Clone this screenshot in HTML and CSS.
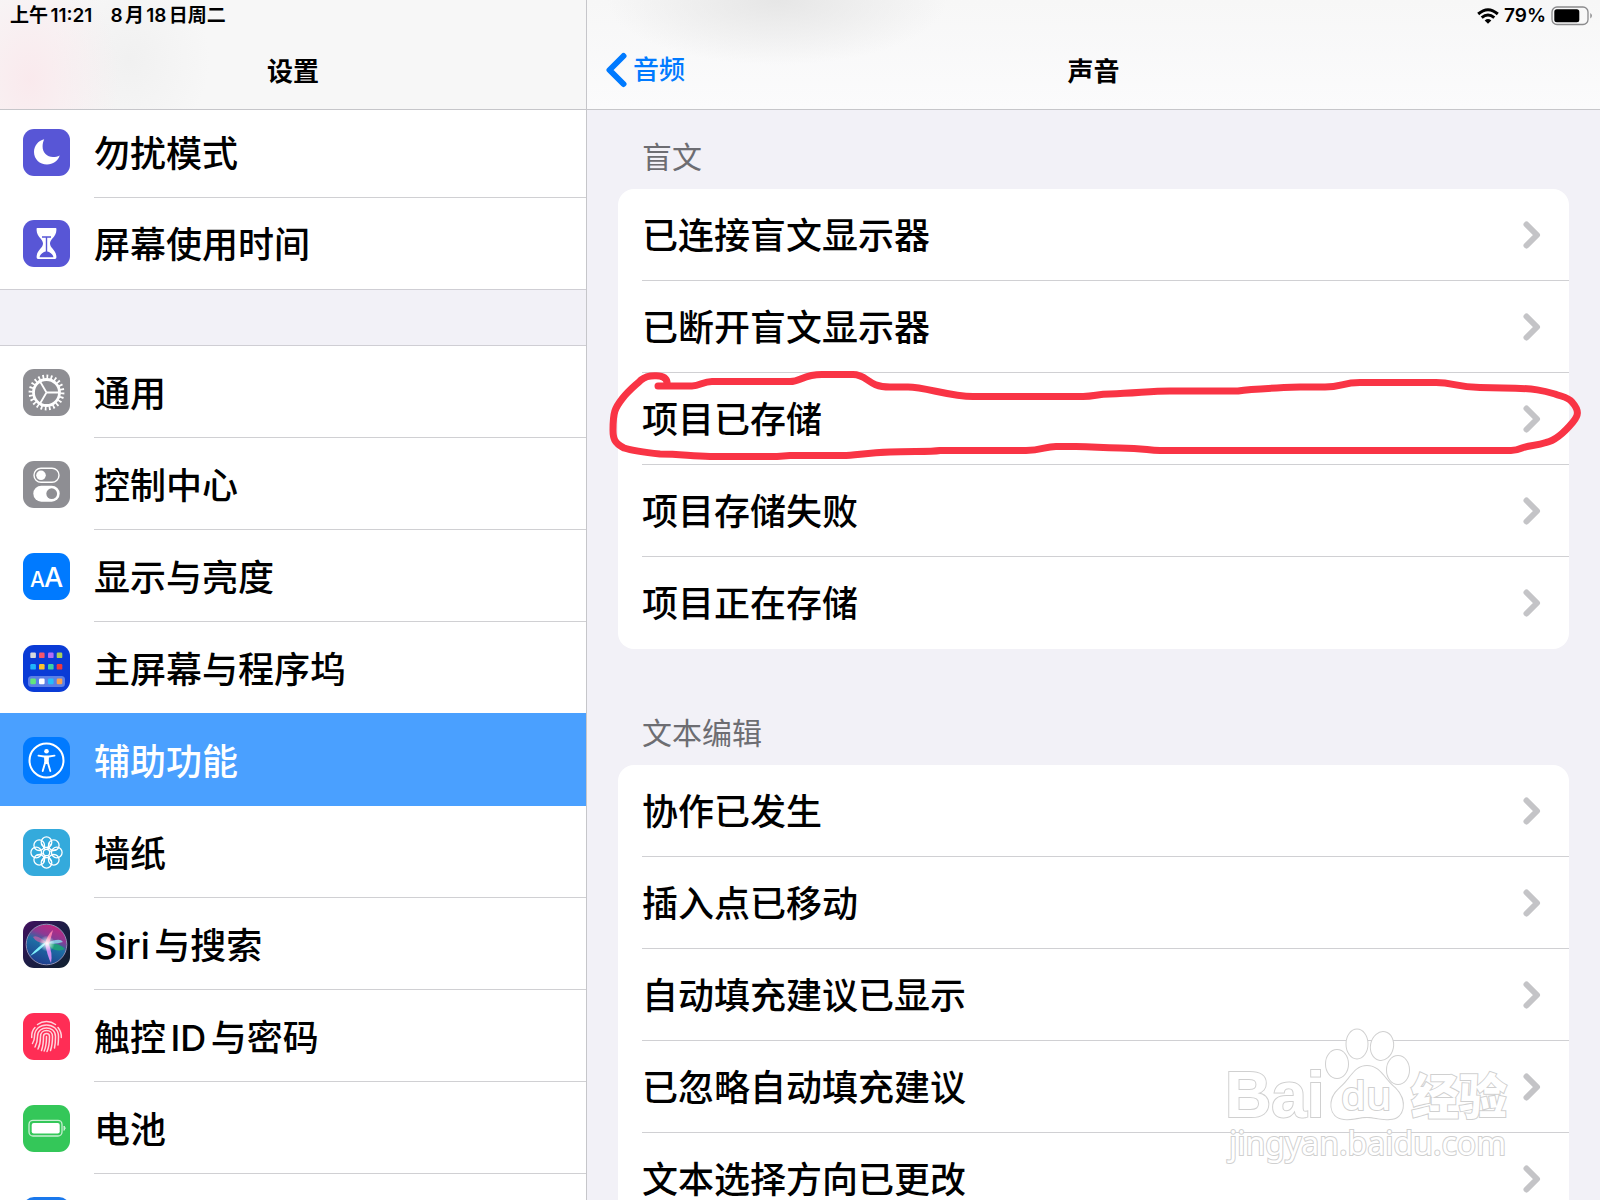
FILE: index.html
```html
<!DOCTYPE html>
<html lang="zh-CN">
<head>
    <meta charset="UTF-8">
    <meta name="viewport" content="width=device-width, initial-scale=1">
    <title>设置</title>
    <link rel="stylesheet" href="styles.css">
</head>
<body>
    <svg class="defs" aria-hidden="true">
        <symbol id="chevron" viewBox="0 0 18 28">
            <path d="M3.5 3.5L14 14L3.5 24.5" fill="none" stroke="#c4c4c7" stroke-width="6" stroke-linecap="round" stroke-linejoin="round"/>
        </symbol>
    </svg>
    <div class="app">
        <aside class="sidebar">
            <header class="bar bar-left">
                <div class="status">
                    <span>上午11:21</span>
                    <span>8月18日周二</span>
                </div>
                <h1 class="title">设置</h1>
            </header>
            <nav class="menu">
                <ul class="group group-first">
                    <li><a class="item" href="#">
                        <svg class="icon" viewBox="0 0 47 47"><rect width="47" height="47" rx="11" fill="#5856d6"/><path d="M21.200 10.200C15 11.600 11 17 11 23C11 30 16.700 35.500 24 35.500C30 35.500 35 32 36.700 26.500C34.500 27.600 32.500 28 30 28C24 28 19.600 23.500 19.600 17.500C19.600 14.700 20.100 12.500 21.200 10.200Z" fill="#fff"/></svg>
                        <span class="label">勿扰模式</span>
                    </a></li>
                    <li><a class="item" href="#">
                        <svg class="icon" viewBox="0 0 47 47"><rect width="47" height="47" rx="11" fill="#5856d6"/><path d="M14 8H33Q33.500 8 33.400 10C33.200 17 27 19 27 23.500C27 28 33.200 30 33.400 37Q33.500 39 32 39H15Q13.500 39 13.600 37C13.800 30 20 28 20 23.500C20 19 13.800 17 13.600 10Q13.500 8 14 8Z" fill="#fff"/><path d="M19 17H28M23.500 17.500V33M17.500 36.500Q18.500 33.500 23.500 32Q28.500 33.500 29.500 36.500Z" fill="#5856d6" stroke="#5856d6" stroke-width="1.400"/></svg>
                        <span class="label">屏幕使用时间</span>
                    </a></li>
                </ul>
                <ul class="group">
                    <li><a class="item" href="#">
                        <svg class="icon" viewBox="0 0 47 47"><rect width="47" height="47" rx="11" fill="#8e8e93"/><g fill="none" stroke="#fff"><circle cx="23.500" cy="23.500" r="13" stroke-width="2.800"/><circle cx="23.500" cy="23.500" r="15.900" stroke-width="4" pathLength="24" stroke-dasharray=".42 .58"/><path d="M23.500 23.500H36M23.500 23.500L17.200 12.700M23.500 23.500L17.200 34.300" stroke-width="1.800"/></g></svg>
                        <span class="label">通用</span>
                    </a></li>
                    <li><a class="item" href="#">
                        <svg class="icon" viewBox="0 0 47 47"><rect width="47" height="47" rx="11" fill="#8e8e93"/><rect x="11" y="7.300" width="25" height="14" rx="7" fill="none" stroke="#fff" stroke-width="1.400"/><circle cx="18" cy="14.300" r="4.800" fill="#fff"/><rect x="10.300" y="24.700" width="26.400" height="16" rx="8" fill="#fff"/><circle cx="28.700" cy="32.700" r="5.400" fill="#8e8e93"/></svg>
                        <span class="label">控制中心</span>
                    </a></li>
                    <li><a class="item" href="#">
                        <svg class="icon" viewBox="0 0 47 47"><rect width="47" height="47" rx="11" fill="#007aff"/><text class="icon-text" x="7" y="34" font-size="21">A</text><text class="icon-text" x="21" y="34" font-size="27">A</text></svg>
                        <span class="label">显示与亮度</span>
                    </a></li>
                    <li><a class="item" href="#">
                        <svg class="icon" viewBox="0 0 47 47"><rect width="47" height="47" rx="11" fill="#0a3bd6"/><rect x="5" y="31" width="37" height="11" rx="3.500" fill="#5b7fe6"/>
                            <rect x="7.300" y="7.500" width="5.600" height="5.600" rx="1.200" fill="#d5d8dc"/><rect x="16" y="7.500" width="5.600" height="5.600" rx="1.200" fill="#f5566c"/><rect x="25" y="7.500" width="5.600" height="5.600" rx="1.200" fill="#b16cf5"/><rect x="33.700" y="7.500" width="5.600" height="5.600" rx="1.200" fill="#a9d05a"/>
                            <rect x="7.300" y="19" width="5.600" height="5.600" rx="1.200" fill="#1fb4fb"/><rect x="16" y="19" width="5.600" height="5.600" rx="1.200" fill="#fcc22c"/><rect x="25" y="19" width="5.600" height="5.600" rx="1.200" fill="#3ad0a4"/><rect x="33.700" y="19" width="5.600" height="5.600" rx="1.200" fill="#f0383c"/>
                            <rect x="7.300" y="33.600" width="5.600" height="5.600" rx="1.200" fill="#62e67c"/><rect x="16" y="33.600" width="5.600" height="5.600" rx="1.200" fill="#fff"/><rect x="25" y="33.600" width="5.600" height="5.600" rx="1.200" fill="#24bdfc"/><rect x="33.700" y="33.600" width="5.600" height="5.600" rx="1.200" fill="#fba04a"/></svg>
                        <span class="label">主屏幕与程序坞</span>
                    </a></li>
                    <li><a class="item active" href="#" aria-current="page">
                        <svg class="icon" viewBox="0 0 47 47"><rect width="47" height="47" rx="11" fill="#007aff"/><circle cx="23.500" cy="23.500" r="17" fill="none" stroke="#fff" stroke-width="2"/><circle cx="23.500" cy="14.300" r="2.300" fill="#fff"/><path d="M15.500 18.600L21 19.500H26L31.500 18.600M19.700 34L22.200 25.500H24.800L27.300 34" fill="none" stroke="#fff" stroke-width="1.900" stroke-linecap="round" stroke-linejoin="round"/><path d="M21 19H26L25.600 27H21.400Z" fill="#fff"/></svg>
                        <span class="label">辅助功能</span>
                    </a></li>
                    <li><a class="item" href="#">
                        <svg class="icon" viewBox="0 0 47 47"><rect width="47" height="47" rx="11" fill="#34aadc"/><g transform="translate(23.500 23.500)" fill="none" stroke="#fff" stroke-width="1.300"><g id="petals"><circle cy="-10.300" r="5.300"/><circle cy="10.300" r="5.300"/><circle cx="-10.300" r="5.300"/><circle cx="10.300" r="5.300"/><path d="M-5 -9L-1.300 -3M5 -9L1.300 -3M-5 9L-1.300 3M5 9L1.300 3"/></g><use href="#petals" transform="rotate(45)"/><circle r="3.200"/></g></svg>
                        <span class="label">墙纸</span>
                    </a></li>
                    <li><a class="item" href="#">
                        <svg class="icon" viewBox="0 0 47 47">
                            <defs>
                                <linearGradient id="siri-bg" x1="0" y1="0" x2="1" y2="1"><stop offset="0" stop-color="#43105f"/><stop offset=".5" stop-color="#1c1d45"/><stop offset="1" stop-color="#10202f"/></linearGradient>
                                <linearGradient id="siri-orb" x1=".7" y1="0" x2=".3" y2="1"><stop offset="0" stop-color="#c5257f"/><stop offset=".3" stop-color="#8c3a94"/><stop offset=".5" stop-color="#1d6fa5"/><stop offset="1" stop-color="#1f3a8c"/></linearGradient>
                                <radialGradient id="siri-glow"><stop offset="0" stop-color="#fff"/><stop offset="1" stop-color="#fff" stop-opacity="0"/></radialGradient>
                            </defs>
                            <rect width="47" height="47" rx="11" fill="url(#siri-bg)"/><circle cx="23.500" cy="23.500" r="20.300" fill="url(#siri-orb)" stroke="#8d8fb4" stroke-width="1"/>
                            <path d="M24 22Q37 22 42 28Q31 33 24 22Z" fill="#1f9e7c"/><path d="M24 22Q14 13 10 16Q14 23 24 22Z" fill="#cc5fa8" opacity=".7"/><path d="M24 22Q37 16 40 21Q32 24 24 22Z" fill="#8fe0f0" opacity=".8"/><path d="M25 20Q17 30 7 35Q15 25 25 20Z" fill="#7ff0fb"/><path d="M22 22Q24 34 28 42Q30 32 25 21Z" fill="#d08cf0"/><path d="M22 23Q24 14 30 9Q28 17 26 23Z" fill="#f77cae"/><circle cx="24" cy="22.500" r="8" fill="url(#siri-glow)"/>
                        </svg>
                        <span class="label">Siri与搜索</span>
                    </a></li>
                    <li><a class="item" href="#">
                        <svg class="icon" viewBox="0 0 47 47"><rect width="47" height="47" rx="11" fill="#ff2d55"/><g fill="none" stroke="#ffd5dd" stroke-width="1.500" stroke-linecap="round"><path d="M14.500 11.500Q18.500 8.500 23.500 8.500Q28.500 8.500 32.500 11.500"/><path d="M8.700 24.500C8.500 20 10 16.500 12 14.500M35 14.500C37.500 17.500 38.500 20.500 38.300 24.500"/><path d="M9.500 30.500Q11.500 27 11.500 23.500C11.500 8 35.500 8 35.500 23.500Q35.500 28 35 32"/><path d="M12 34Q14.500 29 14.500 23.500C14.500 12 32.500 12 32.500 23.500Q32.500 30 31.500 35"/><path d="M15 36Q17.500 31 17.500 23.500C17.500 15.500 29.500 15.500 29.500 23.500Q29.500 32 27.500 37.500"/><path d="M18.500 37.500Q20.500 32 20.500 23.500C20.500 19.500 26.500 19.500 26.500 23.500Q26.500 33 24 38.500"/><path d="M23.500 23.500Q23.500 33 21.200 38"/></g></svg>
                        <span class="label">触控ID与密码</span>
                    </a></li>
                    <li><a class="item" href="#">
                        <svg class="icon" viewBox="0 0 47 47"><rect width="47" height="47" rx="11" fill="#34c759"/><rect x="6" y="15.400" width="33" height="15.600" rx="4" fill="none" stroke="#c9f0d3" stroke-width="1.300"/><rect x="8.700" y="18" width="28" height="10.600" rx="2" fill="#fff"/><path d="M41 21Q43.500 23.200 41 25.400Z" fill="#c9f0d3" stroke="#c9f0d3"/></svg>
                        <span class="label">电池</span>
                    </a></li>
                    <li><a class="item" href="#" aria-label="隐私">
                        <svg class="icon" viewBox="0 0 47 47"><rect width="47" height="47" rx="11" fill="#1a78ec"/></svg>
                    </a></li>
                </ul>
            </nav>
        </aside>

        <main class="content">
            <header class="bar bar-right">
                <div class="status status-right">
                    <svg width="22" height="16" viewBox="0 0 22 16"><g fill="none" stroke="#000" stroke-width="3"><path d="M1.200 6Q11 -2.500 20.800 6"/><path d="M4.700 9.700Q11 4.300 17.300 9.700"/></g><path d="M7.700 12.400Q11 9.800 14.300 12.400L11 15.800Z"/></svg>
                    <span>79%</span>
                    <svg width="42" height="20" viewBox="0 0 42 20"><rect x="1" y="1" width="36" height="17.500" rx="5" fill="none" stroke="#8a8a8c" stroke-width="1.300"/><rect x="3.300" y="3.300" width="25" height="13" rx="2.500"/><path d="M39.300 7Q42.500 9.700 39.300 12.500Z" fill="#8a8a8c"/></svg>
                </div>
                <a class="back" href="#">
                    <svg width="22" height="36" viewBox="0 0 22 36"><path d="M18.500 4L4.500 18L18.500 32" fill="none" stroke="#007aff" stroke-width="6" stroke-linecap="round" stroke-linejoin="round"/></svg>
                    <span>音频</span>
                </a>
                <h2 class="title">声音</h2>
            </header>
            <div class="sections">
                <section>
                    <h3 class="section-title">盲文</h3>
                    <ul class="card">
                        <li><a class="row" href="#"><span class="label">已连接盲文显示器</span><svg class="chevron"><use href="#chevron"/></svg></a></li>
                        <li><a class="row" href="#"><span class="label">已断开盲文显示器</span><svg class="chevron"><use href="#chevron"/></svg></a></li>
                        <li class="marked">
                            <a class="row" href="#"><span class="label">项目已存储</span><svg class="chevron"><use href="#chevron"/></svg></a>
                            <svg class="marker" viewBox="600 373 1000 92" preserveAspectRatio="none" aria-hidden="true">
                                <path vector-effect="non-scaling-stroke" d="M658 386H692C700 386 703 381.500 712 381.500H790C801 381.500 803 374.500 822 374.500H853C868 374.500 867 387 890 387H908C925 387 950 396.500 973 396.500H1083C1095 396.500 1097 394 1110 394C1135 393.500 1150 391 1170 391H1238C1250 389 1270 388 1300 387H1325C1342 387 1342 382.500 1360 382.500H1436C1454 382.500 1455 387 1480 387.500L1503 388C1535 388 1545 391 1555 394C1563 397 1568 397 1572 402C1580 411 1578 416 1573 422C1563 434 1554 441 1546 442.500C1536 446 1529 445 1522 448Q1516 450.500 1511 450.500H1160C1147 450.500 1145 448 1120 448C1100 448 1095 446.500 1076 446.500H1056C1045 446.500 1042 450.500 1026 450.500H940C930 452 910 451 890 452C865 453 855 455.500 843 455.500H790L777 456.500H710C690 456 680 454 660 454C640 452 630 450 624 448C614 443 613 438 613 430C613 412 615 408 622 399C629 390 636 385 641 380C648 374 666 374 667 382"/>
                            </svg>
                        </li>
                        <li><a class="row" href="#"><span class="label">项目存储失败</span><svg class="chevron"><use href="#chevron"/></svg></a></li>
                        <li><a class="row" href="#"><span class="label">项目正在存储</span><svg class="chevron"><use href="#chevron"/></svg></a></li>
                    </ul>
                </section>
                <section>
                    <h3 class="section-title">文本编辑</h3>
                    <ul class="card">
                        <li><a class="row" href="#"><span class="label">协作已发生</span><svg class="chevron"><use href="#chevron"/></svg></a></li>
                        <li><a class="row" href="#"><span class="label">插入点已移动</span><svg class="chevron"><use href="#chevron"/></svg></a></li>
                        <li><a class="row" href="#"><span class="label">自动填充建议已显示</span><svg class="chevron"><use href="#chevron"/></svg></a></li>
                        <li><a class="row" href="#"><span class="label">已忽略自动填充建议</span><svg class="chevron"><use href="#chevron"/></svg></a></li>
                        <li><a class="row" href="#"><span class="label">文本选择方向已更改</span><svg class="chevron"><use href="#chevron"/></svg></a></li>
                    </ul>
                </section>
            </div>
        </main>

        <svg class="watermark" width="330" height="140" viewBox="0 0 330 140">
            <text class="wm-latin" x="25" y="92" font-size="64">Bai</text>
            <g class="wm-shape">
                <ellipse cx="137" cy="39" rx="11" ry="14"/>
                <ellipse cx="157" cy="19" rx="10.500" ry="14.500"/>
                <ellipse cx="182" cy="21" rx="11" ry="14" transform="rotate(12 182 21)"/>
                <ellipse cx="198" cy="45" rx="11" ry="14"/>
                <path d="M167 41C180 41 184 54 195 63C208 76 204 94 190 94C180 95 175 92 167 92C158 92 153 95 144 94C129 93 127 74 140 63C151 54 154 41 167 41Z"/>
            </g>
            <text class="wm-du" x="141" y="85" font-size="40">du</text>
            <text class="wm-cjk" x="211" y="89" font-size="48">经验</text>
            <text class="wm-url" x="29" y="130" font-size="32">jingyan.baidu.com</text>
        </svg>
    </div>
</body>
</html>
```

FILE: styles.css
```css
* {
    box-sizing: border-box;
}
body {
    margin: 0;
    background: #f2f1f7;
    color: #000;
    font-family: Inter, "Noto Sans CJK SC", sans-serif;
}
ul {
    list-style: none;
    margin: 0;
    padding: 0;
}
a {
    color: inherit;
    text-decoration: none;
}
.defs {
    display: none;
}
.app {
    position: relative;
    display: flex;
    height: 100vh;
    overflow: hidden;
}

/* top bars */
.bar {
    position: relative;
    flex: none;
    height: 110px;
    border-bottom: 1px solid #c6c6ca;
}
.bar-left {
    background:
        radial-gradient(ellipse 90px 120px at 30px 80px, rgba(250, 232, 236, .9), transparent),
        radial-gradient(ellipse 80px 90px at 130px 60px, rgba(240, 240, 240, .9), transparent),
        #f7f7f7;
}
.bar-right {
    background:
        radial-gradient(ellipse 170px 65px at 190px 0, #e6e6e6, transparent),
        linear-gradient(#f7f7f7, #fbfbfc);
}
.status {
    display: flex;
    align-items: center;
    gap: 18px;
    height: 31px;
    padding: 0 10px;
    font-size: 19px;
    font-weight: 600;
    line-height: 31px;
    text-autospace: normal;
}
.status-right {
    justify-content: flex-end;
    gap: 5px;
    padding-right: 7px;
}
.title {
    margin: 0;
    padding-top: 2px;
    font-size: 26px;
    font-weight: 600;
    line-height: 78px;
    text-align: center;
}
.back {
    position: absolute;
    left: 18px;
    top: 31px;
    display: flex;
    align-items: center;
    gap: 6px;
    height: 78px;
    color: #007aff;
    font-size: 26px;
    font-weight: 500;
    line-height: 36px;
}

/* left menu */
.sidebar {
    display: flex;
    flex-direction: column;
    flex: 0 0 587px;
    border-right: 1px solid #c6c6ca;
}
.menu {
    flex: 1;
    overflow: hidden;
}
.group {
    margin-bottom: 55px;
    border-top: 1px solid #cfced4;
    background: #fff;
}
.group-first {
    margin-top: -5px;
    border-bottom: 1px solid #cfced4;
}
.item {
    display: flex;
    align-items: center;
    gap: 24px;
    height: 92px;
    padding-left: 23px;
    background: linear-gradient(#d0d0d3, #d0d0d3) right bottom / calc(100% - 94px) 1px no-repeat;
}
.group-first li:last-child .item {
    height: 91px;
    background: none;
}
.item.active {
    background: #4aa0ff;
    box-shadow: 0 -1px #4aa0ff;
    color: #fff;
}
.icon {
    flex: none;
    width: 47px;
    height: 47px;
}
.icon-text {
    fill: #fff;
    font-family: Inter, sans-serif;
    font-weight: 500;
}
.label {
    padding-top: 3px;
    font-size: 36px;
    font-weight: 500;
    line-height: 48px;
    white-space: nowrap;
    text-autospace: normal;
}

/* right pane */
.content {
    display: flex;
    flex-direction: column;
    flex: 1;
    min-width: 0;
}
.sections {
    display: flex;
    flex-direction: column;
    gap: 62px;
    padding: 25px 31px 0;
}
.section-title {
    margin: 0 0 10px 24px;
    color: #6d6d72;
    font-size: 30px;
    font-weight: 400;
    line-height: 44px;
}
.card {
    border-radius: 16px;
    background: #fff;
}
.row {
    display: flex;
    align-items: center;
    justify-content: space-between;
    height: 92px;
    margin-left: 24px;
    padding-right: 28px;
    border-bottom: 1px solid #d0d0d3;
}
.card li:last-child .row {
    border-bottom-color: transparent;
}
.chevron {
    width: 18px;
    height: 28px;
}

/* hand-drawn ring round the saved item */
.marked {
    position: relative;
}
.marker {
    position: absolute;
    left: -18px;
    top: 0;
    width: calc(100% + 49px);
    height: 92px;
    overflow: visible;
    pointer-events: none;
}
.marker path {
    fill: none;
    stroke: #f93445;
    stroke-width: 7;
    stroke-linecap: round;
    stroke-linejoin: round;
}

.watermark {
    position: absolute;
    right: 70px;
    bottom: 35px;
    pointer-events: none;
}
.watermark text,
.wm-shape {
    fill: #fff;
    stroke: #d0d0d0;
    stroke-width: 2;
    paint-order: stroke;
}
.wm-latin {
    font-family: "Liberation Sans", Arial, sans-serif;
    font-weight: 700;
}
.wm-du {
    font-family: "Open Sans", sans-serif;
    font-weight: 600;
}
.wm-cjk {
    font-family: "Noto Sans CJK SC", sans-serif;
    font-weight: 900;
}
.wm-url {
    font-family: "Noto Sans", sans-serif;
}
```
